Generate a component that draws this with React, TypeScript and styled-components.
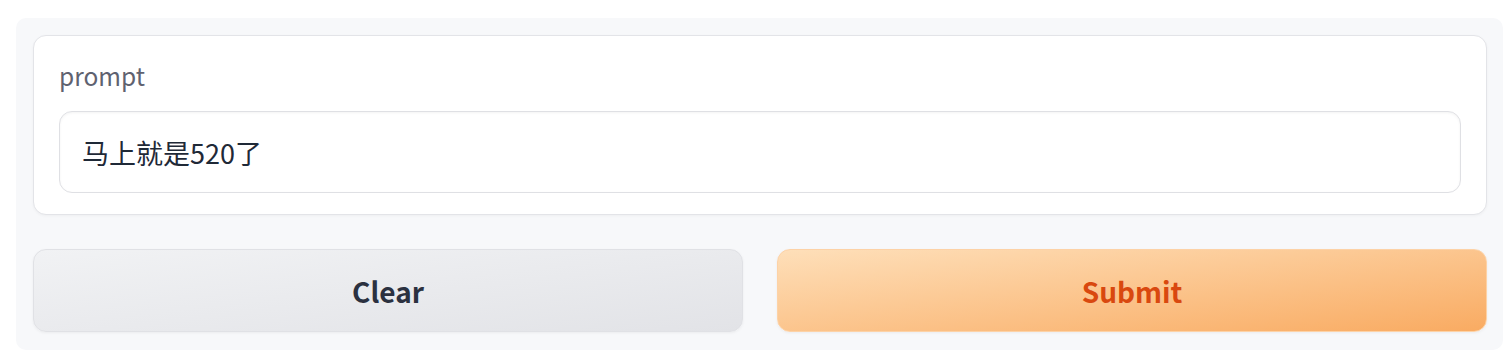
import React from "react";
import styled, { createGlobalStyle } from "styled-components";

const Global = createGlobalStyle`
  html, body { margin: 0; padding: 0; background: #ffffff; }
  body { font-family: "Noto Sans CJK SC", "Noto Sans", sans-serif; }
  * { box-sizing: border-box; }
`;

const Page = styled.div`
  width: 1512px;
  height: 360px;
  padding: 18px 9px 10px 16px;
`;

const Panel = styled.div`
  background: #f7f8fa;
  border-radius: 10px;
  padding: 17px 16px 18px 17px;
  display: flex;
  flex-direction: column;
  gap: 34px;
`;

const Card = styled.div`
  background: #ffffff;
  border: 1.5px solid #e3e4e8;
  border-radius: 13px;
  box-shadow: 0 1px 3px rgba(0, 0, 0, 0.04);
  padding: 24px 25px 21px 25px;
  display: flex;
  flex-direction: column;
  gap: 19px;
`;

const Label = styled.span`
  font-size: 24.5px;
  line-height: 32px;
  color: #5f6270;
`;

const Input = styled.div`
  height: 82px;
  border: 1.5px solid #dfe0e4;
  border-radius: 13px;
  background: #ffffff;
  box-shadow: inset 0 1px 3px rgba(0, 0, 0, 0.05);
  display: flex;
  align-items: center;
  padding: 0 22px;
  font-size: 27px;
  color: #1f2937;
`;

const Buttons = styled.div`
  display: grid;
  grid-template-columns: 1fr 1fr;
  gap: 34px;
`;

const Button = styled.button<{ $primary?: boolean }>`
  height: 83px;
  border-radius: 13px;
  font-family: "Noto Sans CJK SC", "Noto Sans", sans-serif;
  font-size: 28px;
  font-weight: 700;
  cursor: pointer;
  border: 1.5px solid ${(p) => (p.$primary ? "#fdd2a6" : "#e0e1e5")};
  color: ${(p) => (p.$primary ? "#d9480f" : "#2b3140")};
  background: ${(p) =>
    p.$primary
      ? "linear-gradient(to bottom right, #fedfb9, #f9ab62)"
      : "linear-gradient(to bottom right, #f1f2f4, #e2e3e7)"};
  box-shadow: 0 1px 3px rgba(0, 0, 0, 0.05);
`;

export default function App() {
  return (
    <>
      <Global />
      <Page>
        <Panel>
          <Card>
            <Label>prompt</Label>
            <Input>马上就是520了</Input>
          </Card>
          <Buttons>
            <Button>Clear</Button>
            <Button $primary>Submit</Button>
          </Buttons>
        </Panel>
      </Page>
    </>
  );
}
